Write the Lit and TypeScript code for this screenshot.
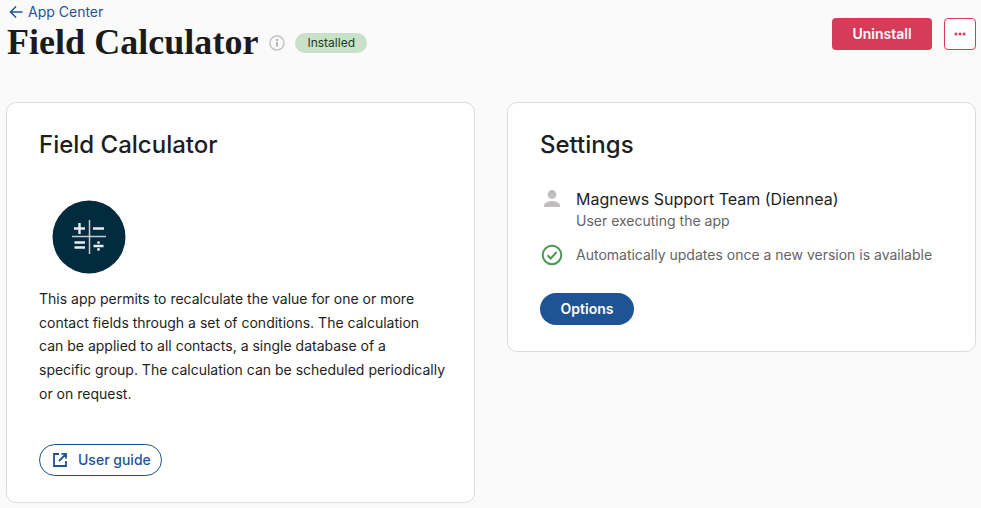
import { LitElement, html, css } from "lit";
import { customElement } from "lit/decorators.js";

@customElement("app-root")
export class AppRoot extends LitElement {
  static styles = css`
    :host { display: block; width: 981px; height: 508px; overflow: hidden; background: #fafafa; font-family: Inter, sans-serif; color: #1e1e1e; }
    * { box-sizing: border-box; }
    .page { padding: 0 5px 0 6px; }
    .header { display: flex; justify-content: space-between; align-items: flex-start; height: 102px; }
    .back { display: flex; align-items: center; gap: 5px; height: 25px; padding: 0 0 1px 3px; color: #1f5494; font-size: 14px; line-height: 22px; }
    .back svg { display: block; }
    .titlerow { display: flex; align-items: center; height: 37px; margin-top: -1px; }
    h1 { margin: 0 0 0 1px; font: 700 36px/37px "Liberation Serif", serif; color: #1b1b1b; letter-spacing: 0.03px; }
    .info { margin-left: 11px; display: block; }
    .badge { margin-left: 10px; height: 20px; padding: 0 12px; border-radius: 10px; background: #c9e1c8; color: #1c3b22; font-size: 12px; line-height: 20px; }
    .actions { display: flex; gap: 12px; margin-top: 18px; }
    .uninstall { width: 100px; height: 32px; border: 0; border-radius: 4px; background: #d63b58; color: #fff; font: 600 14px/30px Inter, sans-serif; padding: 0 0 1px; }
    .more { width: 32px; height: 32px; border: 1px solid #d63b58; border-radius: 4px; background: #fff; display: flex; align-items: center; justify-content: center; padding: 0; }
    .cards { display: grid; grid-template-columns: 469px 469px; gap: 32px; align-items: start; }
    .card { background: #fff; border: 1px solid #dcdcdc; border-radius: 10px; padding: 27px 32px 26px 32px; }
    .card.left { height: 401px; }
    .card.right { height: 250px; }
    h2 { margin: 0; font: 500 24px/30px Inter, sans-serif; color: #1e1e1e; }
    .logo { display: block; margin: 40px 0 0 13px; }
    p { margin: 13px 0 0; font-size: 14px; line-height: 23.7px; color: #1e1e1e; width: 408px; }
    .guide { margin-top: 38px; display: inline-flex; align-items: center; gap: 10px; height: 32px; width: 123px; padding: 0 0 0 12px; border: 1px solid #1f5494; border-radius: 16px; background: #fff; color: #1f5494; font: 500 14px Inter, sans-serif; }
    .row { display: flex; gap: 12px; }
    .person { margin-top: 28px; }
    .person svg, .auto svg { display: block; flex: none; }
    .name { font-size: 16px; line-height: 22px; margin-bottom: 1px; color: #1e1e1e; }
    .sub { font-size: 14px; line-height: 20px; color: #646464; }
    .auto { margin-top: 12px; align-items: center; }
    .auto span { font-size: 14px; line-height: 24px; color: #646464; }
    .options { margin-top: 26px; display: block; width: 94px; height: 32px; border: 0; border-radius: 16px; background: #1f5494; color: #fff; font: 600 14px/32px Inter, sans-serif; padding: 0; }
  `;

  render() {
    return html`<div class="page">
      <div class="header">
        <div>
          <div class="back">
            <svg width="14" height="14" viewBox="0 0 14 14" fill="none" stroke="#1f5494" stroke-width="1.5"><path d="M13.500 7H1.500M7 1.500 1.500 7 7 12.500"/></svg>
            <span>App Center</span>
          </div>
          <div class="titlerow">
            <h1>Field Calculator</h1>
            <svg class="info" width="16" height="16" viewBox="0 0 16 16" fill="none"><circle cx="8" cy="8" r="7" stroke="#c4c4c8" stroke-width="1.500"/><path d="M8 7v4.500" stroke="#9a9a9a" stroke-width="1.500"/><circle cx="8" cy="4.900" r="1" fill="#9a9a9a"/></svg>
            <span class="badge">Installed</span>
          </div>
        </div>
        <div class="actions">
          <button class="uninstall">Uninstall</button>
          <button class="more"><svg width="12" height="4" viewBox="0 0 12 4" fill="#d63b58"><circle cx="2" cy="2" r="1.500"/><circle cx="6" cy="2" r="1.500"/><circle cx="10" cy="2" r="1.500"/></svg></button>
        </div>
      </div>
      <div class="cards">
        <section class="card left">
          <h2>Field Calculator</h2>
          <svg class="logo" width="74" height="74" viewBox="0 0 74 74">
            <circle cx="37" cy="37" r="36.500" fill="#022b3f"/>
            <g fill="none" stroke="#e6ecee">
              <path d="M20 36.500h34M37.500 20v34" stroke="#c4ccd0" stroke-width="1.500"/>
              <path d="M22 28.500h11M27.500 23v11M41 28.500h11M22.500 42.500h10.500M22.500 47.500h10.500M41.500 46h10" stroke-width="2.400"/>
            </g>
            <circle cx="46.500" cy="42.600" r="1.400" fill="#e6ecee"/><circle cx="46.500" cy="49.400" r="1.400" fill="#e6ecee"/>
          </svg>
          <p>This app permits to recalculate the value for one or more contact fields through a set of conditions. The calculation can be applied to all contacts, a single database of a<br>specific group. The calculation can be scheduled periodically or on request.</p>
          <button class="guide">
            <svg width="16" height="16" viewBox="0 0 16 16" fill="none" stroke="#1f5494" stroke-width="1.800"><path d="M7 2H2v12h12V9M9.500 1.900H14v4.500M14 2 7 9"/></svg>
            <span>User guide</span>
          </button>
        </section>
        <section class="card right">
          <h2>Settings</h2>
          <div class="row person">
            <svg width="24" height="22" viewBox="0 0 24 22" fill="#c2bdbd"><circle cx="12" cy="6.500" r="4.400"/><path d="M4 19v-1.600C4 14.600 9 13 12 13s8 1.600 8 4.400V19z"/></svg>
            <div><div class="name">Magnews Support Team (Diennea)</div><div class="sub">User executing the app</div></div>
          </div>
          <div class="row auto">
            <svg width="24" height="24" viewBox="0 0 24 24" fill="none" stroke="#4c9a52" stroke-width="2"><circle cx="12" cy="12" r="9.300"/><path d="m7.500 12.300 3.200 3.200 6-6.500"/></svg>
            <span>Automatically updates once a new version is available</span>
          </div>
          <button class="options">Options</button>
        </section>
      </div>
    </div>`;
  }
}
